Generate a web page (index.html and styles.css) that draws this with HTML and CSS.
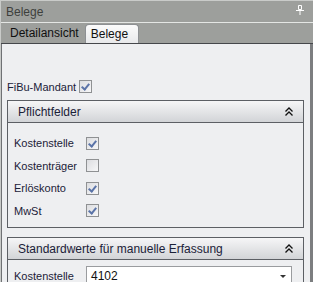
FILE: index.html
```html
<!DOCTYPE html>
<html lang="de">
<head>
    <meta charset="UTF-8">
    <title>Belege</title>
    <link rel="stylesheet" href="styles.css">
</head>
<body>
    <div class="panel">
        <div class="titlebar">
            <span class="title">Belege</span>
            <svg class="pin" width="8" height="10" viewBox="0 0 8 10">
                <path d="M2.5 0.5h3v4h-3z" fill="none" stroke="#fff" stroke-width="1"/>
                <path d="M0 5.5h8" stroke="#fff" stroke-width="1"/>
                <path d="M4 6v4" stroke="#fff" stroke-width="1"/>
            </svg>
        </div>
        <div class="tabstrip">
            <div class="tab">Detailansicht</div>
            <div class="tab active">Belege</div>
        </div>
        <div class="content">
            <div class="row top-row">
                <span class="label">FiBu-Mandant</span>
                <span class="check checked"></span>
            </div>

            <div class="group">
                <div class="group-head">
                    <span>Pflichtfelder</span>
                    <svg class="collapse" width="8" height="9" viewBox="0 0 8 9">
                        <path d="M0.5 4.5L4 1L7.5 4.5M0.5 8.5L4 5L7.5 8.5" fill="none" stroke="#111" stroke-width="1.3"/>
                    </svg>
                </div>
                <div class="group-body">
                    <div class="row"><span class="label">Kostenstelle</span><span class="check checked"></span></div>
                    <div class="row"><span class="label">Kostenträger</span><span class="check"></span></div>
                    <div class="row"><span class="label">Erlöskonto</span><span class="check checked"></span></div>
                    <div class="row"><span class="label">MwSt</span><span class="check checked"></span></div>
                </div>
            </div>

            <div class="group">
                <div class="group-head">
                    <span>Standardwerte für manuelle Erfassung</span>
                    <svg class="collapse" width="8" height="9" viewBox="0 0 8 9">
                        <path d="M0.5 4.5L4 1L7.5 4.5M0.5 8.5L4 5L7.5 8.5" fill="none" stroke="#111" stroke-width="1.3"/>
                    </svg>
                </div>
                <div class="group-body defaults">
                    <div class="row">
                        <span class="label">Kostenstelle</span>
                        <div class="combo">
                            <span>4102</span>
                            <span class="arrow"></span>
                        </div>
                    </div>
                </div>
            </div>
        </div>
    </div>
</body>
</html>
```
FILE: styles.css
```css
body {
    margin: 0;
    font-family: 'Liberation Sans', Arial, sans-serif;
    font-size: 11px;
    color: #1b2138;
    overflow: hidden;
}
.panel {
    width: 313px;
    height: 282px;
    display: flex;
    flex-direction: column;
    background-color: #9d9f9c;
    border-top: 1px solid #c9cbc9;
    border-left: 1px solid #c9cbc9;
    box-sizing: border-box;
    overflow: hidden;
}
.titlebar {
    flex-shrink: 0;
    height: 21px;
    display: flex;
    align-items: center;
    justify-content: space-between;
    padding: 0 9px 0 5px;
    border-bottom: 1px solid #e4e6e4;
    color: #3d3f3d;
    font-size: 12px;
}
.pin {
    margin-top: -3px;
}
.tabstrip {
    flex-shrink: 0;
    height: 20px;
    display: flex;
    align-items: flex-end;
    padding-left: 4px;
    border-bottom: 1px solid #45474b;
}
.tab {
    padding: 0 5px 3px;
    font-size: 12px;
    color: #101010;
}
.tab.active {
    margin-left: 1px;
    padding: 2px 10px 2px 5px;
    background: linear-gradient(#fbfbfb, #e8e9eb);
    border: 1px solid #8d9093;
    border-bottom: none;
    border-radius: 4px 4px 0 0;
}
.content {
    flex: 1;
    min-height: 0;
    background-color: #eeeff1;
    border-left: 1px solid #6f7174;
    border-right: 3px solid #7c7e80;
    padding: 36px 6px 0 5px;
}
.row {
    display: flex;
    align-items: center;
    height: 22.5px;
    flex-shrink: 0;
}
.label {
    width: 72px;
}
.top-row {
    height: 13px;
    margin-bottom: 7px;
}
.check {
    width: 11px;
    height: 11px;
    border: 1px solid #8f9193;
    background: linear-gradient(135deg, #dcdde0, #f7f7f8);
    position: relative;
}
.check.checked::after {
    content: "";
    position: absolute;
    left: 3px;
    top: 1px;
    width: 3px;
    height: 6px;
    border: solid #5b74a8;
    border-width: 0 2px 2px 0;
    transform: rotate(40deg);
}
.group {
    border: 1px solid #5c5f64;
    margin-bottom: 9px;
}
.group-head {
    height: 21px;
    display: flex;
    align-items: center;
    justify-content: space-between;
    padding: 0 10px;
    background: linear-gradient(#f6f6f7, #d2d4d7);
    border-bottom: 1px solid #5c5f64;
    font-size: 12px;
    color: #1b2138;
}
.group-body {
    padding: 9px 6px 5px 6px;
}
.group-body.defaults {
    padding-top: 5px;
}
.combo {
    flex: 1;
    height: 18px;
    margin-right: 5px;
    background-color: #fff;
    border: 1px solid #9a9c9f;
    display: flex;
    align-items: center;
    justify-content: space-between;
    padding: 0 5px 0 4px;
    font-size: 12px;
    color: #111;
}
.arrow {
    width: 0;
    height: 0;
    border-left: 3px solid transparent;
    border-right: 3px solid transparent;
    border-top: 3px solid #333;
}
```
